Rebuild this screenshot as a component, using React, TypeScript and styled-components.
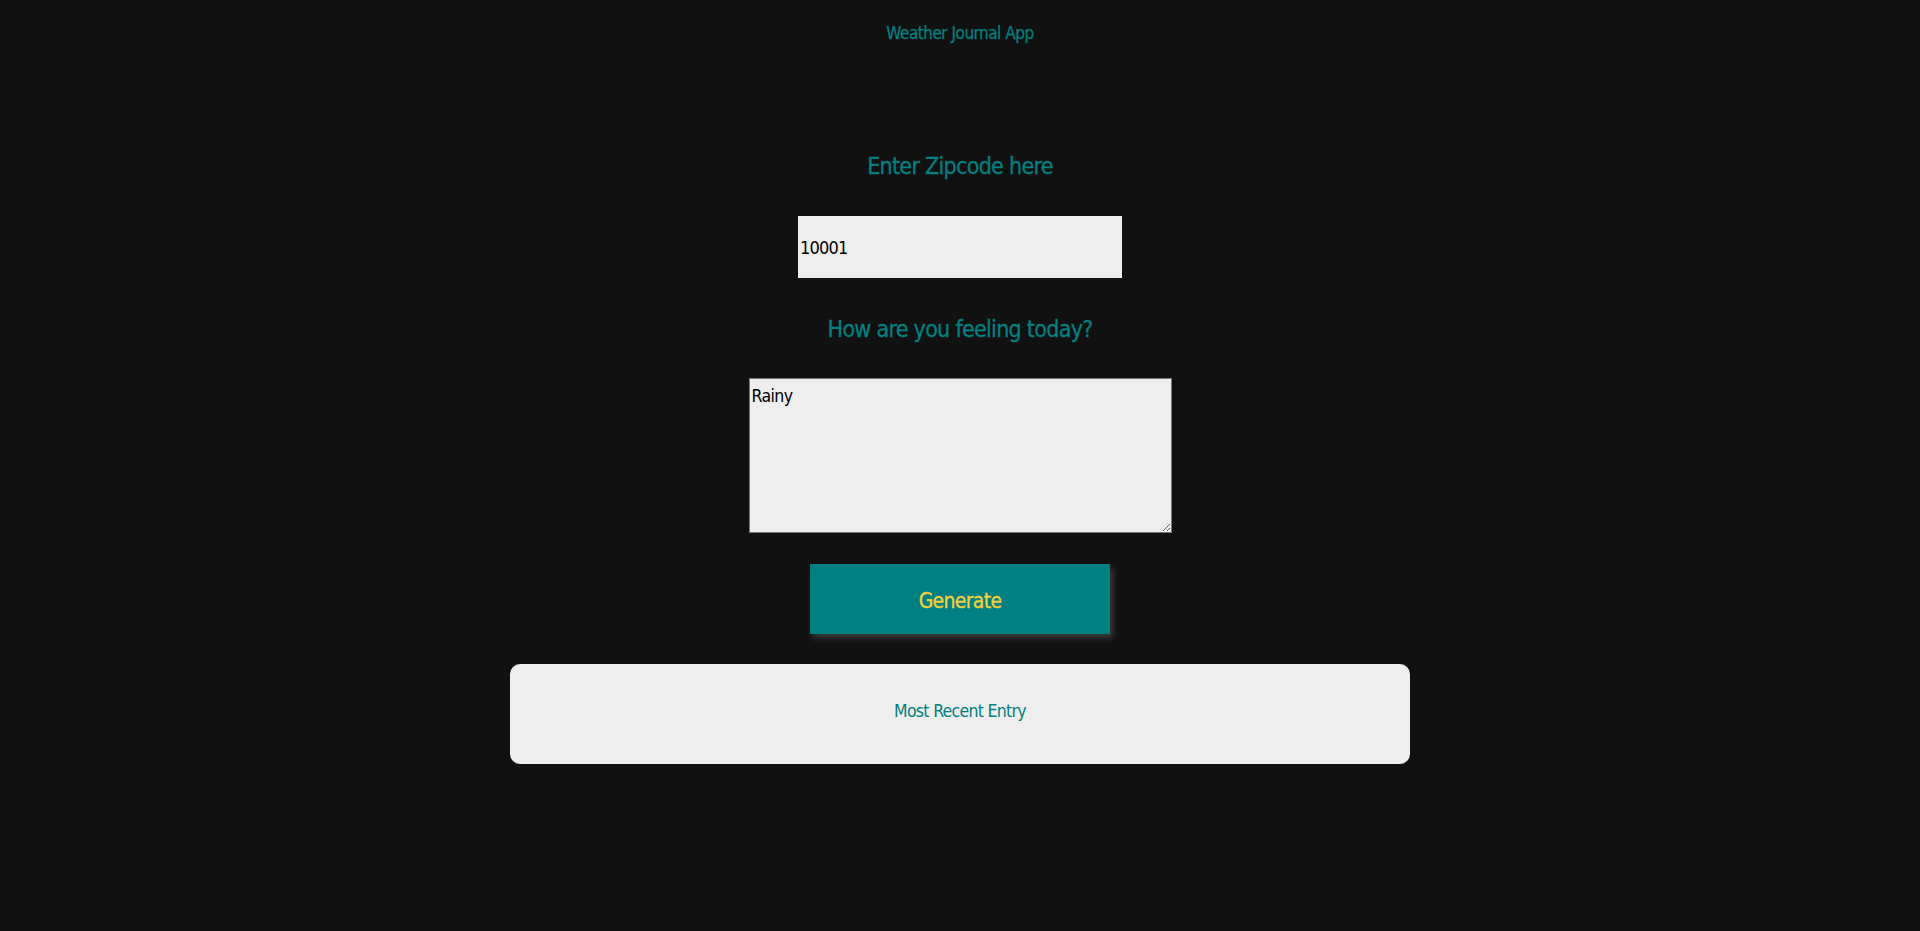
import React from "react";
import styled, { createGlobalStyle } from "styled-components";

const FONT = `"Liberation Sans Narrow", "DejaVu Sans Condensed", "Liberation Sans", sans-serif`;

const Global = createGlobalStyle`
  html, body {
    margin: 0;
    padding: 0;
    background: #111111;
    min-height: 100%;
  }
  body {
    font-family: ${FONT};
  }
`;

const Page = styled.div`
  min-height: 931px;
  background: #111111;
  display: flex;
  flex-direction: column;
  align-items: center;
  font-family: ${FONT};
`;

const Header = styled.header`
  height: 64px;
  padding-top: 2px;
  box-sizing: border-box;
  display: flex;
  align-items: center;
  justify-content: center;
  color: #008080;
  font-size: 17px;
  letter-spacing: -0.5px;
  -webkit-text-stroke: 0.25px #008080;
`;

const Label = styled.label<{ $top: number }>`
  display: block;
  margin-top: ${(p) => p.$top}px;
  height: 40px;
  line-height: 40px;
  color: #008080;
  font-size: 23px;
  letter-spacing: -0.7px;
  text-align: center;
  -webkit-text-stroke: 0.3px #008080;
`;

const ZipInput = styled.input`
  margin-top: 30px;
  width: 324px;
  height: 62px;
  box-sizing: border-box;
  border: none;
  outline: none;
  background: #eeeeee;
  padding: 0 2px;
  font-family: ${FONT};
  font-size: 18px;
  letter-spacing: -0.8px;
  color: #000;
`;

const Feelings = styled.textarea`
  margin-top: 29px;
  width: 423px;
  height: 155px;
  box-sizing: border-box;
  border: 1px solid #767676;
  background: #eeeeee;
  padding: 7px 2px 2px;
  font-family: ${FONT};
  font-size: 17.5px;
  letter-spacing: -0.6px;
  color: #000;
  outline: none;
  display: block;
`;

const GenerateButton = styled.button`
  margin-top: 31px;
  width: 300px;
  height: 70px;
  padding-top: 4px;
  border: none;
  background: #008080;
  color: #f4d03f;
  font-family: ${FONT};
  font-size: 21px;
  letter-spacing: -0.7px;
  -webkit-text-stroke: 0.3px #f4d03f;
  box-shadow: 3px 4px 6px #3c3c3c;
  cursor: pointer;
`;

const EntryCard = styled.section`
  margin-top: 30px;
  width: 900px;
  height: 100px;
  box-sizing: border-box;
  background: #eeeeee;
  border-radius: 10px;
  display: flex;
  align-items: center;
  justify-content: center;
`;

const EntryTitle = styled.div`
  color: #008080;
  font-size: 17.5px;
  letter-spacing: -0.7px;
  margin-top: -6px;
`;

export default function App() {
  return (
    <>
      <Global />
      <Page>
        <Header>Weather Journal App</Header>
        <Label $top={82} htmlFor="zip">Enter Zipcode here</Label>
        <ZipInput id="zip" type="text" defaultValue="10001" />
        <Label $top={31} htmlFor="feelings">How are you feeling today?</Label>
        <Feelings id="feelings" defaultValue="Rainy" />
        <GenerateButton type="button">Generate</GenerateButton>
        <EntryCard>
          <EntryTitle>Most Recent Entry</EntryTitle>
        </EntryCard>
      </Page>
    </>
  );
}
